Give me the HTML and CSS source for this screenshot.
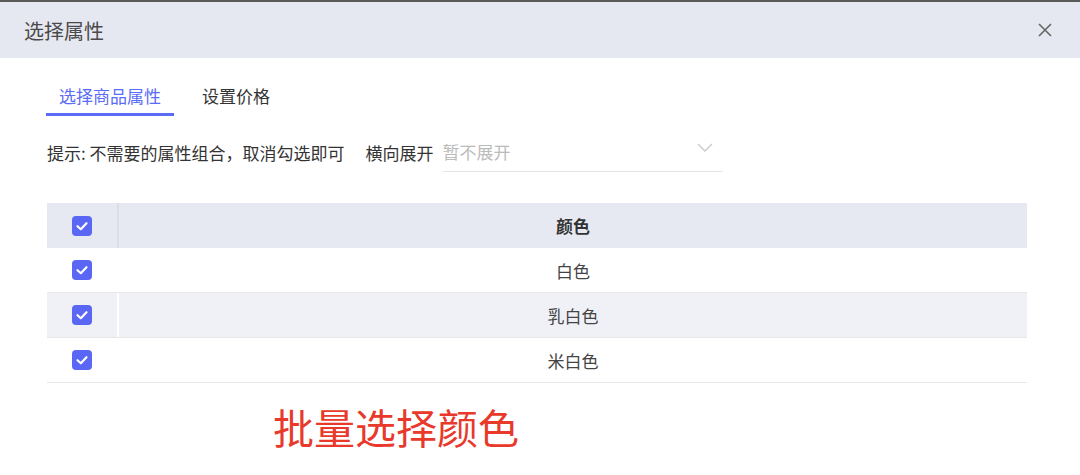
FILE: index.html
```html
<!DOCTYPE html>
<html>

<head>
  <title>选择属性</title>
  <link rel="stylesheet" href="styles.css">
</head>

<body>
  <div class="dialog">
    <div class="dialog-header">
      <span class="dialog-title">选择属性</span>
      <svg class="close" width="14" height="14" viewBox="0 0 14 14">
        <path d="M1 1L13 13M13 1L1 13" stroke="#666" stroke-width="1.6" fill="none" />
      </svg>
    </div>
    <div class="dialog-body">
      <div class="tabs">
        <div class="tab active">选择商品属性</div>
        <div class="tab">设置价格</div>
      </div>
      <div class="hint-row">
        <span class="hint">提示: 不需要的属性组合，取消勾选即可</span>
        <span class="lbl">横向展开</span>
        <div class="select">
          <span class="placeholder">暂不展开</span>
          <svg class="chevron" width="16" height="9" viewBox="0 0 16 9">
            <path d="M1 1L8 8L15 1" stroke="#c8c8c8" stroke-width="1.3" fill="none" />
          </svg>
        </div>
      </div>
      <div class="table">
        <div class="tr head">
          <div class="td check"><span class="box"></span></div>
          <div class="td name">颜色</div>
        </div>
        <div class="tr">
          <div class="td check"><span class="box"></span></div>
          <div class="td name">白色</div>
        </div>
        <div class="tr striped">
          <div class="td check"><span class="box"></span></div>
          <div class="td name">乳白色</div>
        </div>
        <div class="tr">
          <div class="td check"><span class="box"></span></div>
          <div class="td name">米白色</div>
        </div>
      </div>
      <div class="note">批量选择颜色</div>
    </div>
  </div>
</body>

</html>
```

FILE: styles.css
```css
body {
  margin: 0;
  background: #fff;
  font-family: "Noto Sans CJK SC", "Noto Sans", sans-serif;
  color: #333;
}

.dialog {
  width: 1080px;
  height: 475px;
  border-top: 2px solid #5a5a5a;
  box-sizing: border-box;
  overflow: hidden;
}

.dialog-header {
  height: 56px;
  background: #e6e8f1;
  display: flex;
  align-items: center;
  justify-content: space-between;
  padding: 0 28px 0 24px;
}

.dialog-title {
  font-size: 20px;
  color: #4a4a4a;
}

.dialog-body {
  padding: 0 53px 0 47px;
}

.tabs {
  display: flex;
  padding-top: 25px;
}

.tab {
  font-size: 17px;
  line-height: 26px;
  padding: 0 0 5px;
  margin-right: 28px;
  color: #333;
}

.tab.active {
  color: #5b6cf6;
  border-bottom: 3px solid #5b6cf6;
  padding: 0 13px 4px 13px;
  margin-left: -1px;
}

.hint-row {
  display: flex;
  align-items: center;
  margin-top: 16px;
  height: 40px;
  font-size: 17px;
}

.hint {
  color: #333;
}

.lbl {
  margin-left: 21px;
  margin-right: 9px;
  color: #333;
}

.select {
  width: 280px;
  height: 40px;
  border-bottom: 1px solid #e4e4e4;
  box-sizing: border-box;
  display: flex;
  align-items: center;
  justify-content: space-between;
  padding: 0 10px 0 0;
}

.placeholder {
  color: #bbb;
}

.chevron {
  margin-top: -8px;
}

.table {
  margin-top: 31px;
  width: 980px;
}

.tr {
  display: flex;
  height: 45px;
  border-bottom: 1px solid #e6e6e6;
  box-sizing: border-box;
  align-items: stretch;
}

.tr.head {
  background: #e6e9f2;
  border-bottom: none;
}

.tr.striped {
  background: #f0f1f7;
}

.td {
  display: flex;
  align-items: center;
  justify-content: center;
  font-size: 17px;
  color: #444;
}

.td.check {
  width: 70px;
  border-right: 2px solid #fff;
}

.tr.head .td.check {
  border-right: 2px solid #dcdee6;
}

.td.name {
  flex: 1;
}

.tr.head .td.name {
  font-weight: bold;
  color: #333;
}

.box {
  width: 20px;
  height: 20px;
  border-radius: 4px;
  background: #5a66f4 url("data:image/svg+xml,%3Csvg xmlns='http://www.w3.org/2000/svg' width='20' height='20'%3E%3Cpath d='M5.5 10.2L8.8 13.2L14.5 7.2' stroke='white' stroke-width='2.2' fill='none' stroke-linecap='round' stroke-linejoin='round'/%3E%3C/svg%3E") no-repeat center;
}

.note {
  margin-top: 17px;
  margin-left: 226px;
  font-size: 41px;
  line-height: 52px;
  color: #e8392b;
}
```
